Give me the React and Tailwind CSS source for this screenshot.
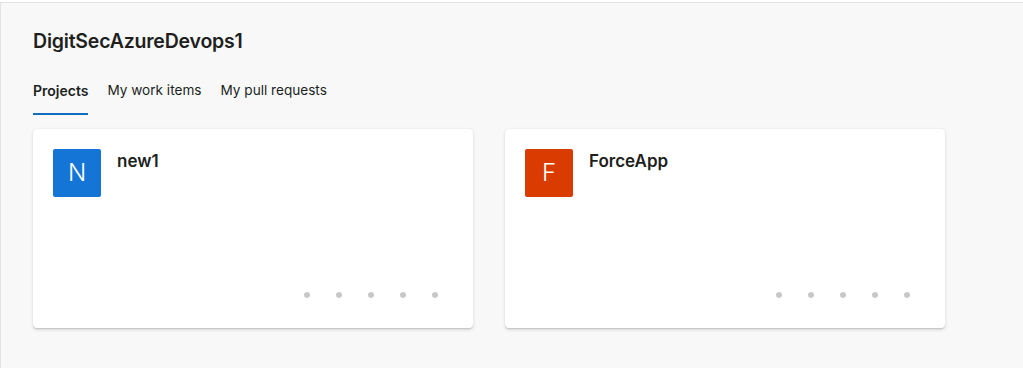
import React from 'react';

const projects = [
    { name: 'new1', initial: 'N', color: 'bg-[#1475d7]' },
    { name: 'ForceApp', initial: 'F', color: 'bg-[#da3b01]' },
];

const tabs = ['Projects', 'My work items', 'My pull requests'];

const ProjectCard = ({ project }) => (
    <div className="w-[440px] h-[199px] bg-white rounded-[4px] shadow-[0_1.6px_3.6px_rgba(0,0,0,0.13),0_0.3px_0.9px_rgba(0,0,0,0.11)] flex flex-col px-5 pt-5 pb-[30px]">
        <div className="flex gap-4">
            <div className={`w-12 h-12 rounded-[2px] ${project.color} flex items-center justify-center text-white text-[24px] font-light`}>
                {project.initial}
            </div>
            <div className="pt-[1px] text-[17px] font-semibold text-[#201f1e] leading-[22px]">{project.name}</div>
        </div>
        <div className="mt-auto flex justify-end gap-[26px] pr-[15px]">
            {[0, 1, 2, 3, 4].map((i) => (
                <span key={i} className="w-[6px] h-[6px] rounded-full bg-[#c8c8c8]" />
            ))}
        </div>
    </div>
);

export default function App() {
    return (
        <div className="w-[1023px] h-[368px] bg-white pt-[2px] font-['Inter','Liberation_Sans',sans-serif]">
            <div className="h-[366px] bg-[#f8f8f8] border-t border-l border-[#e3e3e3] pl-8 pt-[24px]">
                <h1 className="text-[19.5px] font-semibold text-[#201f1e] leading-[28px] tracking-[-0.2px]">DigitSecAzureDevops1</h1>
                {/* Tabs */}
                <div className="flex gap-[19px] mt-[24px] text-[#201f1e] leading-[21px]">
                    {tabs.map((t, i) => (
                        <div key={t} className={`pb-[12px] pt-[1px] border-b-2 ${i === 0 ? 'border-[#106ebe] font-semibold text-[14px]' : 'border-transparent text-[13.6px]'}`}>
                            {t}
                        </div>
                    ))}
                </div>
                <div className="flex gap-8 mt-[14px]">
                    {projects.map((p) => (
                        <ProjectCard key={p.name} project={p} />
                    ))}
                </div>
            </div>
        </div>
    );
}
